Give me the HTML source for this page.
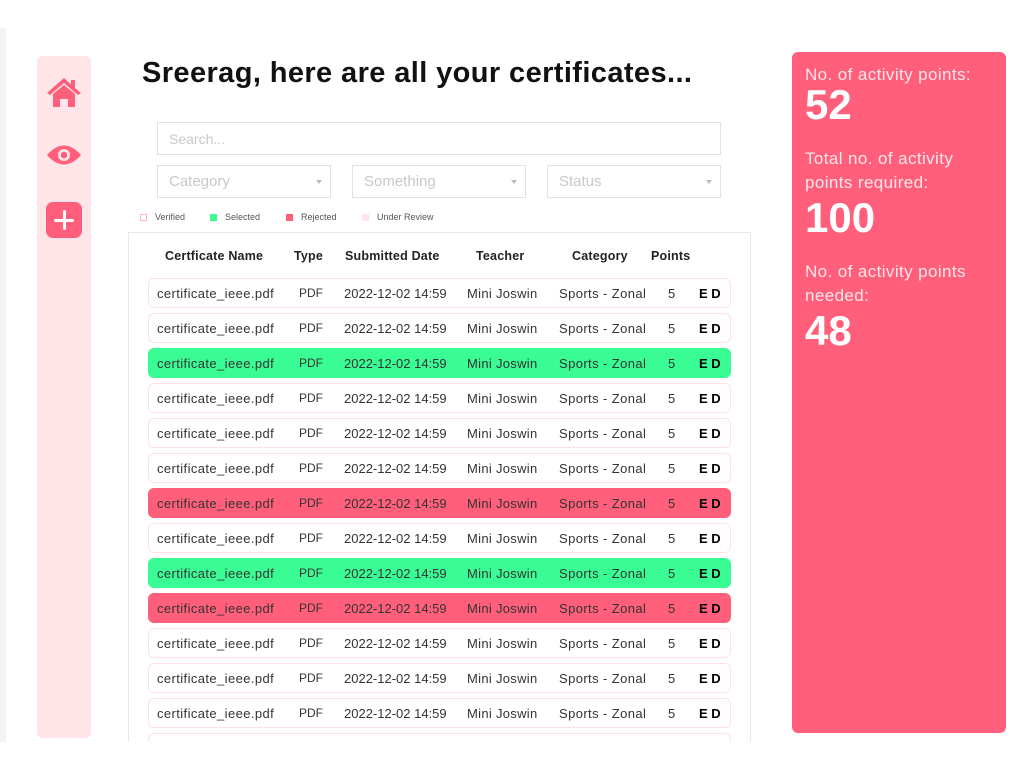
<!DOCTYPE html>
<html><head><style>
*{margin:0;padding:0;box-sizing:border-box}
body{width:1024px;height:768px;background:#fff;font-family:"Liberation Sans",sans-serif;position:relative;overflow:hidden}
#wrap{position:absolute;left:0;top:0;width:1024px;height:742px;overflow:hidden}
.strip{position:absolute;left:0;top:28px;width:6px;height:714px;background:#f3f3f3}
.side{position:absolute;left:37px;top:56px;width:54px;height:682px;background:#ffe4e8;border-radius:6px}
.title{position:absolute;left:142px;top:57px;font-size:29px;font-weight:bold;color:#111;letter-spacing:0.4px}
.inp{position:absolute;border:1.5px solid #e2e2e2;color:#c8c8c8;font-size:14px;padding-left:11px;display:flex;align-items:center}
.inp .ar{position:absolute;right:8px;top:14px;width:0;height:0;border-left:3.5px solid transparent;border-right:3.5px solid transparent;border-top:4px solid #bbb}
.leg{position:absolute;top:212px;font-size:9px;color:#555}
.leg i{display:inline-block;width:7px;height:7px;margin-right:8px;vertical-align:-1px}
.card{position:absolute;left:128px;top:232px;width:623px;height:520px;border:1.5px solid #e8e8e8;border-bottom:none}
.hd{position:absolute;top:249px;font-size:12.5px;color:#222;font-weight:bold;letter-spacing:0.2px}
.row{position:absolute;left:148px;width:583px;height:30px;border:1.3px solid #ffe1e5;border-radius:6px;font-size:13px;color:#333}
.row.g{background:#3afc94;border-color:#3afc94}
.row.r{background:#ff5f7a;border-color:#ff5f7a}
.row span{position:absolute;top:7px;white-space:nowrap}
.panel{position:absolute;left:792px;top:52px;width:214px;height:681px;background:#ff5f7a;border-radius:6px;color:#fff}
.panel .l{position:absolute;left:13px;font-size:17px;color:#ffe6ea;line-height:24px;letter-spacing:0.4px}
.panel .n{position:absolute;left:13px;font-size:42px;font-weight:bold}
</style></head><body>
<div id="wrap">
<div class="strip"></div>
<div class="side">
<svg style="position:absolute;left:9px;top:20px" width="36" height="32" viewBox="0 0 36 32"><path d="M18 2 L1 17 L4 19 L18 7 L32 19 L35 17 L29 12 V4 H25 V8.5 Z" fill="#ff5f7a"/><path d="M7 18 L18 9 L29 18 V31 H22 V23 H14 V31 H7 Z" fill="#ff5f7a"/></svg>
<svg style="position:absolute;left:9px;top:88px" width="36" height="22" viewBox="0 0 36 22"><path d="M1 11 Q18 -8 35 11 Q18 30 1 11Z" fill="#ff5f7a"/><circle cx="18" cy="11" r="6" fill="#ffe4e8"/><circle cx="18" cy="11" r="3.3" fill="#ff5f7a"/></svg>
<div style="position:absolute;left:9px;top:146px;width:36px;height:36px;background:#ff5f7a;border-radius:7px"><div style="position:absolute;left:16.5px;top:8px;width:3.5px;height:20px;background:#fff;border-radius:2px"></div><div style="position:absolute;left:8px;top:16.5px;width:20px;height:3.5px;background:#fff;border-radius:2px"></div></div>
</div>
<div class="title">Sreerag, here are all your certificates...</div>
<div class="inp" style="left:157px;top:122px;width:564px;height:33px">Search...</div>
<div class="inp" style="left:157px;top:165px;width:174px;height:33px;font-size:15px">Category<div class="ar"></div></div>
<div class="inp" style="left:352px;top:165px;width:174px;height:33px;font-size:15px">Something<div class="ar"></div></div>
<div class="inp" style="left:547px;top:165px;width:174px;height:33px;font-size:15px">Status<div class="ar"></div></div>
<div class="leg" style="left:140px"><i style="border:1px solid #ffb6c1"></i>Verified</div>
<div class="leg" style="left:210px"><i style="background:#3afc94"></i>Selected</div>
<div class="leg" style="left:286px"><i style="background:#ff5f7a"></i>Rejected</div>
<div class="leg" style="left:362px"><i style="background:#ffe4e8"></i>Under Review</div>
<div class="card"></div>
<div class="hd" style="left:165px">Certficate Name</div>
<div class="hd" style="left:294px">Type</div>
<div class="hd" style="left:345px">Submitted Date</div>
<div class="hd" style="left:476px">Teacher</div>
<div class="hd" style="left:572px">Category</div>
<div class="hd" style="left:651px">Points</div>
<div id="rows"></div>
<div class="row" style="top:733px"></div>
<div class="panel">
<div class="l" style="top:11px">No. of activity points:</div>
<div class="n" style="top:29px">52</div>
<div class="l" style="top:95px">Total no. of activity<br>points required:</div>
<div class="n" style="top:142px">100</div>
<div class="l" style="top:208px">No. of activity points<br>needed:</div>
<div class="n" style="top:255px">48</div>
</div>
</div>
<script>
var t="wwgwwwrwgrwww",h="";
for(var i=0;i<t.length;i++){var c=t[i]=="w"?"":t[i];
h+='<div class="row '+c+'" style="top:'+(278+35*i)+'px"><span style="left:8px;letter-spacing:0.4px">certificate_ieee.pdf</span><span style="left:150px;font-size:12px">PDF</span><span style="left:195px">2022-12-02 14:59</span><span style="left:318px;letter-spacing:0.3px">Mini Joswin</span><span style="left:410px;letter-spacing:0.4px">Sports - Zonal</span><span style="left:519px">5</span><span style="left:550px;font-weight:bold;color:#000;font-size:13px;top:7px">E D</span></div>';}
document.getElementById("rows").innerHTML=h;
</script>
</body></html>
